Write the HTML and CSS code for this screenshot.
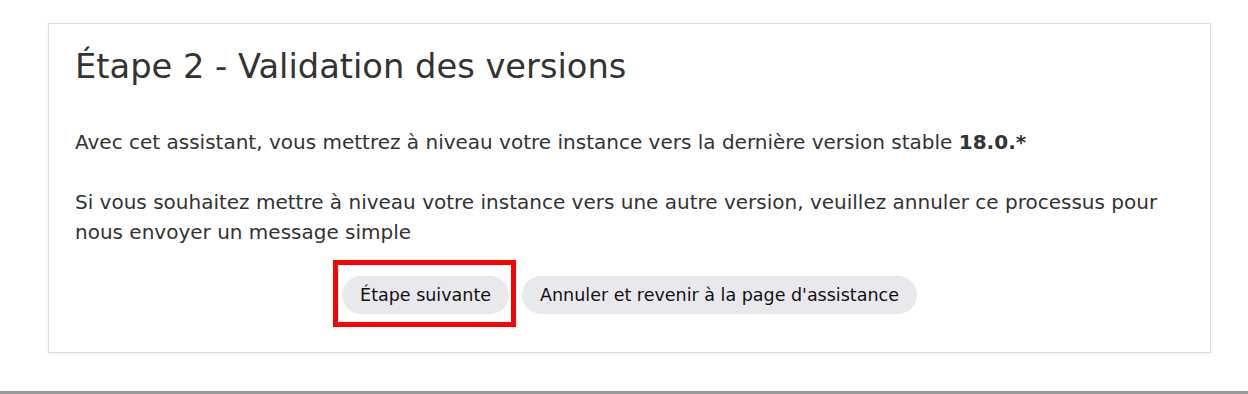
FILE: index.html
```html
<!DOCTYPE html>
<html lang="fr">

<head>
    <meta charset="UTF-8">
    <meta name="viewport" content="width=device-width, initial-scale=1.0">
    <link rel="stylesheet" href="styles.css">
</head>

<body>
    <div class="page">
        <div class="card">
            <h1>Étape 2 - Validation des versions</h1>
            <p>Avec cet assistant, vous mettrez à niveau votre instance vers la dernière version stable <b>18.0.*</b></p>
            <p>Si vous souhaitez mettre à niveau votre instance vers une autre version, veuillez annuler ce processus pour nous envoyer un message simple</p>
            <div class="actions">
                <span class="highlight">
                    <button class="btn">Étape suivante</button>
                </span>
                <button class="btn">Annuler et revenir à la page d'assistance</button>
            </div>
        </div>
    </div>
    <div class="bottom-line"></div>
</body>

</html>
```

FILE: styles.css
```css
/* Page reset */
body {
    margin: 0;
    font-family: "DejaVu Sans", sans-serif;
    color: #333;
    background: #fff;
}

/* Card wrapper */
.page {
    padding: 23px 37px 0 48px;
    height: 368px;
    box-sizing: border-box;
}

.card {
    border: 1px solid #ddd;
    box-shadow: 0 1px 4px rgba(0, 0, 0, 0.08);
    padding: 20px 26px 38px 26px;
    height: 330px;
    box-sizing: border-box;
}

h1 {
    font-size: 33.7px;
    font-weight: normal;
    margin: 0 0 37px 0;
    line-height: 46px;
}

p {
    font-size: 20px;
    line-height: 30px;
    margin: 0 0 30px 0;
}

/* Buttons centered */
.actions {
    display: flex;
    justify-content: center;
    align-items: center;
    gap: 13px;
    margin-top: -1px;
}

.highlight {
    position: relative;
    display: inline-flex;
}

/* Red annotation frame */
.highlight::after {
    content: "";
    position: absolute;
    left: -9px;
    right: -7px;
    top: -16px;
    bottom: -13px;
    border: 5px solid #f00;
    pointer-events: none;
}

.btn {
    font-family: "DejaVu Sans", sans-serif;
    font-size: 17.5px;
    color: #111;
    background: #e9e8ed;
    border: none;
    border-radius: 19px;
    height: 38px;
    padding: 0 18px;
}

.bottom-line {
    margin-top: 23px;
    height: 3px;
    background: #999;
}
```
